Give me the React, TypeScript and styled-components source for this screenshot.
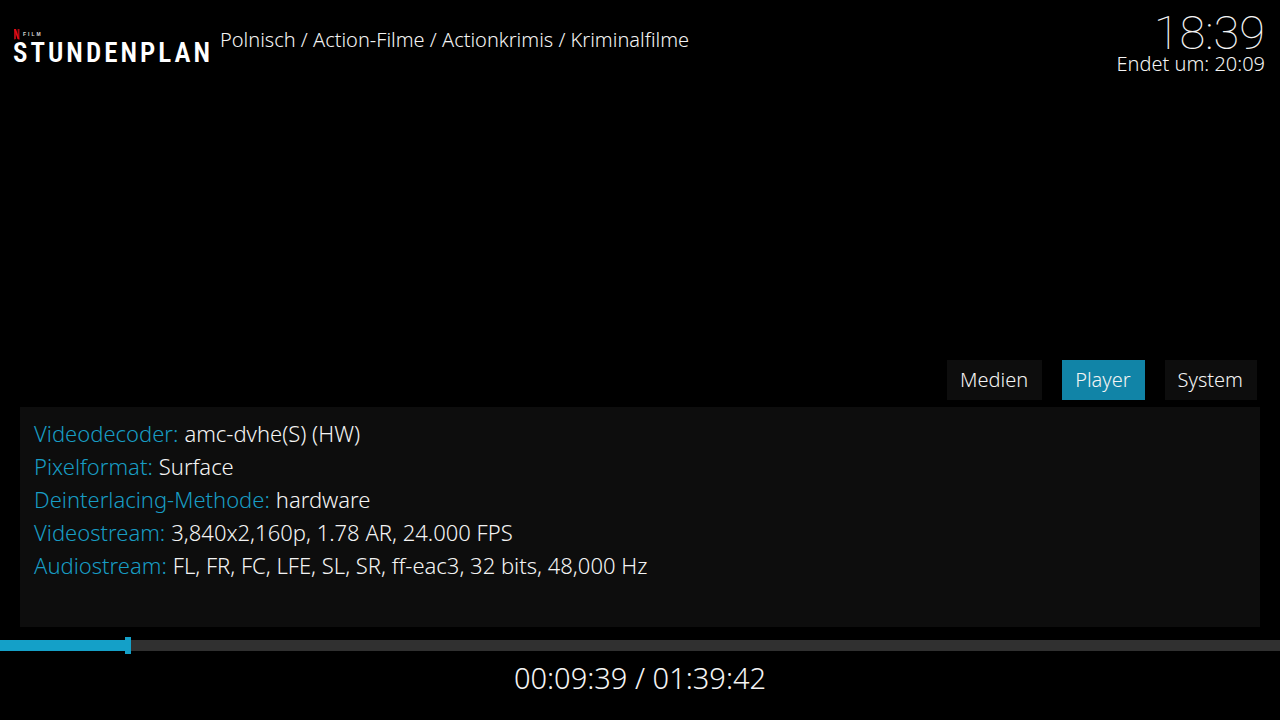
import React, { useState } from "react";
import styled, { createGlobalStyle } from "styled-components";

const GlobalStyle = createGlobalStyle`
  * { box-sizing: border-box; }
  body {
    margin: 0;
    background: #000;
    color: #f4f4f4;
    font-family: "Noto Sans", "Open Sans", sans-serif;
    font-weight: 300;
  }
`;

const Page = styled.main`
  min-height: 100vh;
  display: flex;
  flex-direction: column;
  background: #000;
`;

const Header = styled.header`
  display: flex;
  align-items: flex-start;
  padding: 14px 15px 0 13px;
`;

const Logo = styled.svg`
  flex: none;
  width: 206px;
  height: 44px;
  margin-top: 14px;
`;

const Genres = styled.p`
  flex: 1;
  margin: 12px 0 0 1px;
  font-size: 20px;
  line-height: 28px;
`;

const Clock = styled.div`
  text-align: right;
`;

const Now = styled.time`
  display: block;
  font-family: Roboto, sans-serif;
  font-weight: 100;
  font-size: 47px;
  line-height: 38px;
`;

const Ends = styled.div`
  font-size: 20px;
  line-height: 24px;
`;

const Controls = styled.section`
  margin-top: auto;
  display: flex;
  flex-direction: column;
`;

const Tabs = styled.nav`
  display: flex;
  justify-content: flex-end;
  gap: 20px;
  padding-right: 23px;
  margin-bottom: 7px;
`;

const Tab = styled.button<{ $active: boolean }>`
  height: 40px;
  padding: 0 14px 0 13px;
  border: 0;
  background: ${(p) => (p.$active ? "#1184a7" : "#0d0d0d")};
  color: #f4f4f4;
  font: inherit;
  font-size: 20px;
  line-height: 40px;
`;

const Panel = styled.dl`
  margin: 0 20px 10px;
  min-height: 220px;
  padding: 10px 14px;
  background: #0d0d0d;
  font-size: 22px;
  line-height: 33px;
`;

const Row = styled.div`
  display: flex;
  gap: 6px;
`;

const Label = styled.dt`
  color: #189cc3;
`;

const Value = styled.dd`
  margin: 0;
`;

const Seek = styled.input`
  appearance: none;
  display: block;
  width: 100%;
  height: 17px;
  margin: 0;
  background: transparent;

  &::-webkit-slider-runnable-track {
    height: 11px;
    background: linear-gradient(#14a0c8, #14a0c8) 0 0 / var(--played) 100% no-repeat, #303030;
  }

  &::-webkit-slider-thumb {
    appearance: none;
    width: 6px;
    height: 17px;
    margin-top: -3px;
    border: 0;
    border-radius: 0;
    background: #14a0c8;
  }
`;

const Time = styled.div`
  padding: 4px 0 22px;
  text-align: center;
  font-size: 29px;
  line-height: 40px;
`;

const tabs = ["Medien", "Player", "System"];

const details = [
  ["Videodecoder:", "amc-dvhe(S) (HW)"],
  ["Pixelformat:", "Surface"],
  ["Deinterlacing-Methode:", "hardware"],
  ["Videostream:", "3,840x2,160p, 1.78 AR, 24.000 FPS"],
  ["Audiostream:", "FL, FR, FC, LFE, SL, SR, ff-eac3, 32 bits, 48,000 Hz"],
];

export default function App() {
  const [active, setActive] = useState("Player");
  const [played, setPlayed] = useState(9.8);

  return (
    <Page>
      <GlobalStyle />
      <Header>
        <Logo viewBox="0 0 206 44" role="img" aria-label="Netflix Film Stundenplan">
          <path d="M1 1h2v10l-2 .4zM4.600 1h1.900v10.400l-1.900-.4z" fill="#a90b13" />
          <path d="M1 1h2l3.500 10.400-1.900-.4z" fill="#e50914" />
          <text x="10" y="8" fill="#d8d8d8" fontFamily="Liberation Sans, sans-serif" fontSize="5" fontWeight="700" letterSpacing="2">
            FILM
          </text>
          <text
            x="0"
            y="34"
            fill="#fff"
            fontFamily="Roboto Condensed, Liberation Sans Narrow, sans-serif"
            fontWeight="600"
            fontSize="27"
            letterSpacing="3"
          >
            STUNDENPLAN
          </text>
        </Logo>
        <Genres>Polnisch / Action-Filme / Actionkrimis / Kriminalfilme</Genres>
        <Clock>
          <Now>18:39</Now>
          <Ends>Endet um: 20:09</Ends>
        </Clock>
      </Header>
      <Controls>
        <Tabs>
          {tabs.map((name) => (
            <Tab key={name} type="button" $active={name === active} onClick={() => setActive(name)}>
              {name}
            </Tab>
          ))}
        </Tabs>
        <Panel>
          {details.map(([label, value]) => (
            <Row key={label}>
              <Label>{label}</Label>
              <Value>{value}</Value>
            </Row>
          ))}
        </Panel>
        <Seek
          type="range"
          aria-label="Position"
          min={0}
          max={100}
          step={0.1}
          value={played}
          onChange={(e) => setPlayed(Number(e.target.value))}
          style={{ "--played": `${played}%` } as React.CSSProperties}
        />
        <Time>00:09:39 / 01:39:42</Time>
      </Controls>
    </Page>
  );
}
